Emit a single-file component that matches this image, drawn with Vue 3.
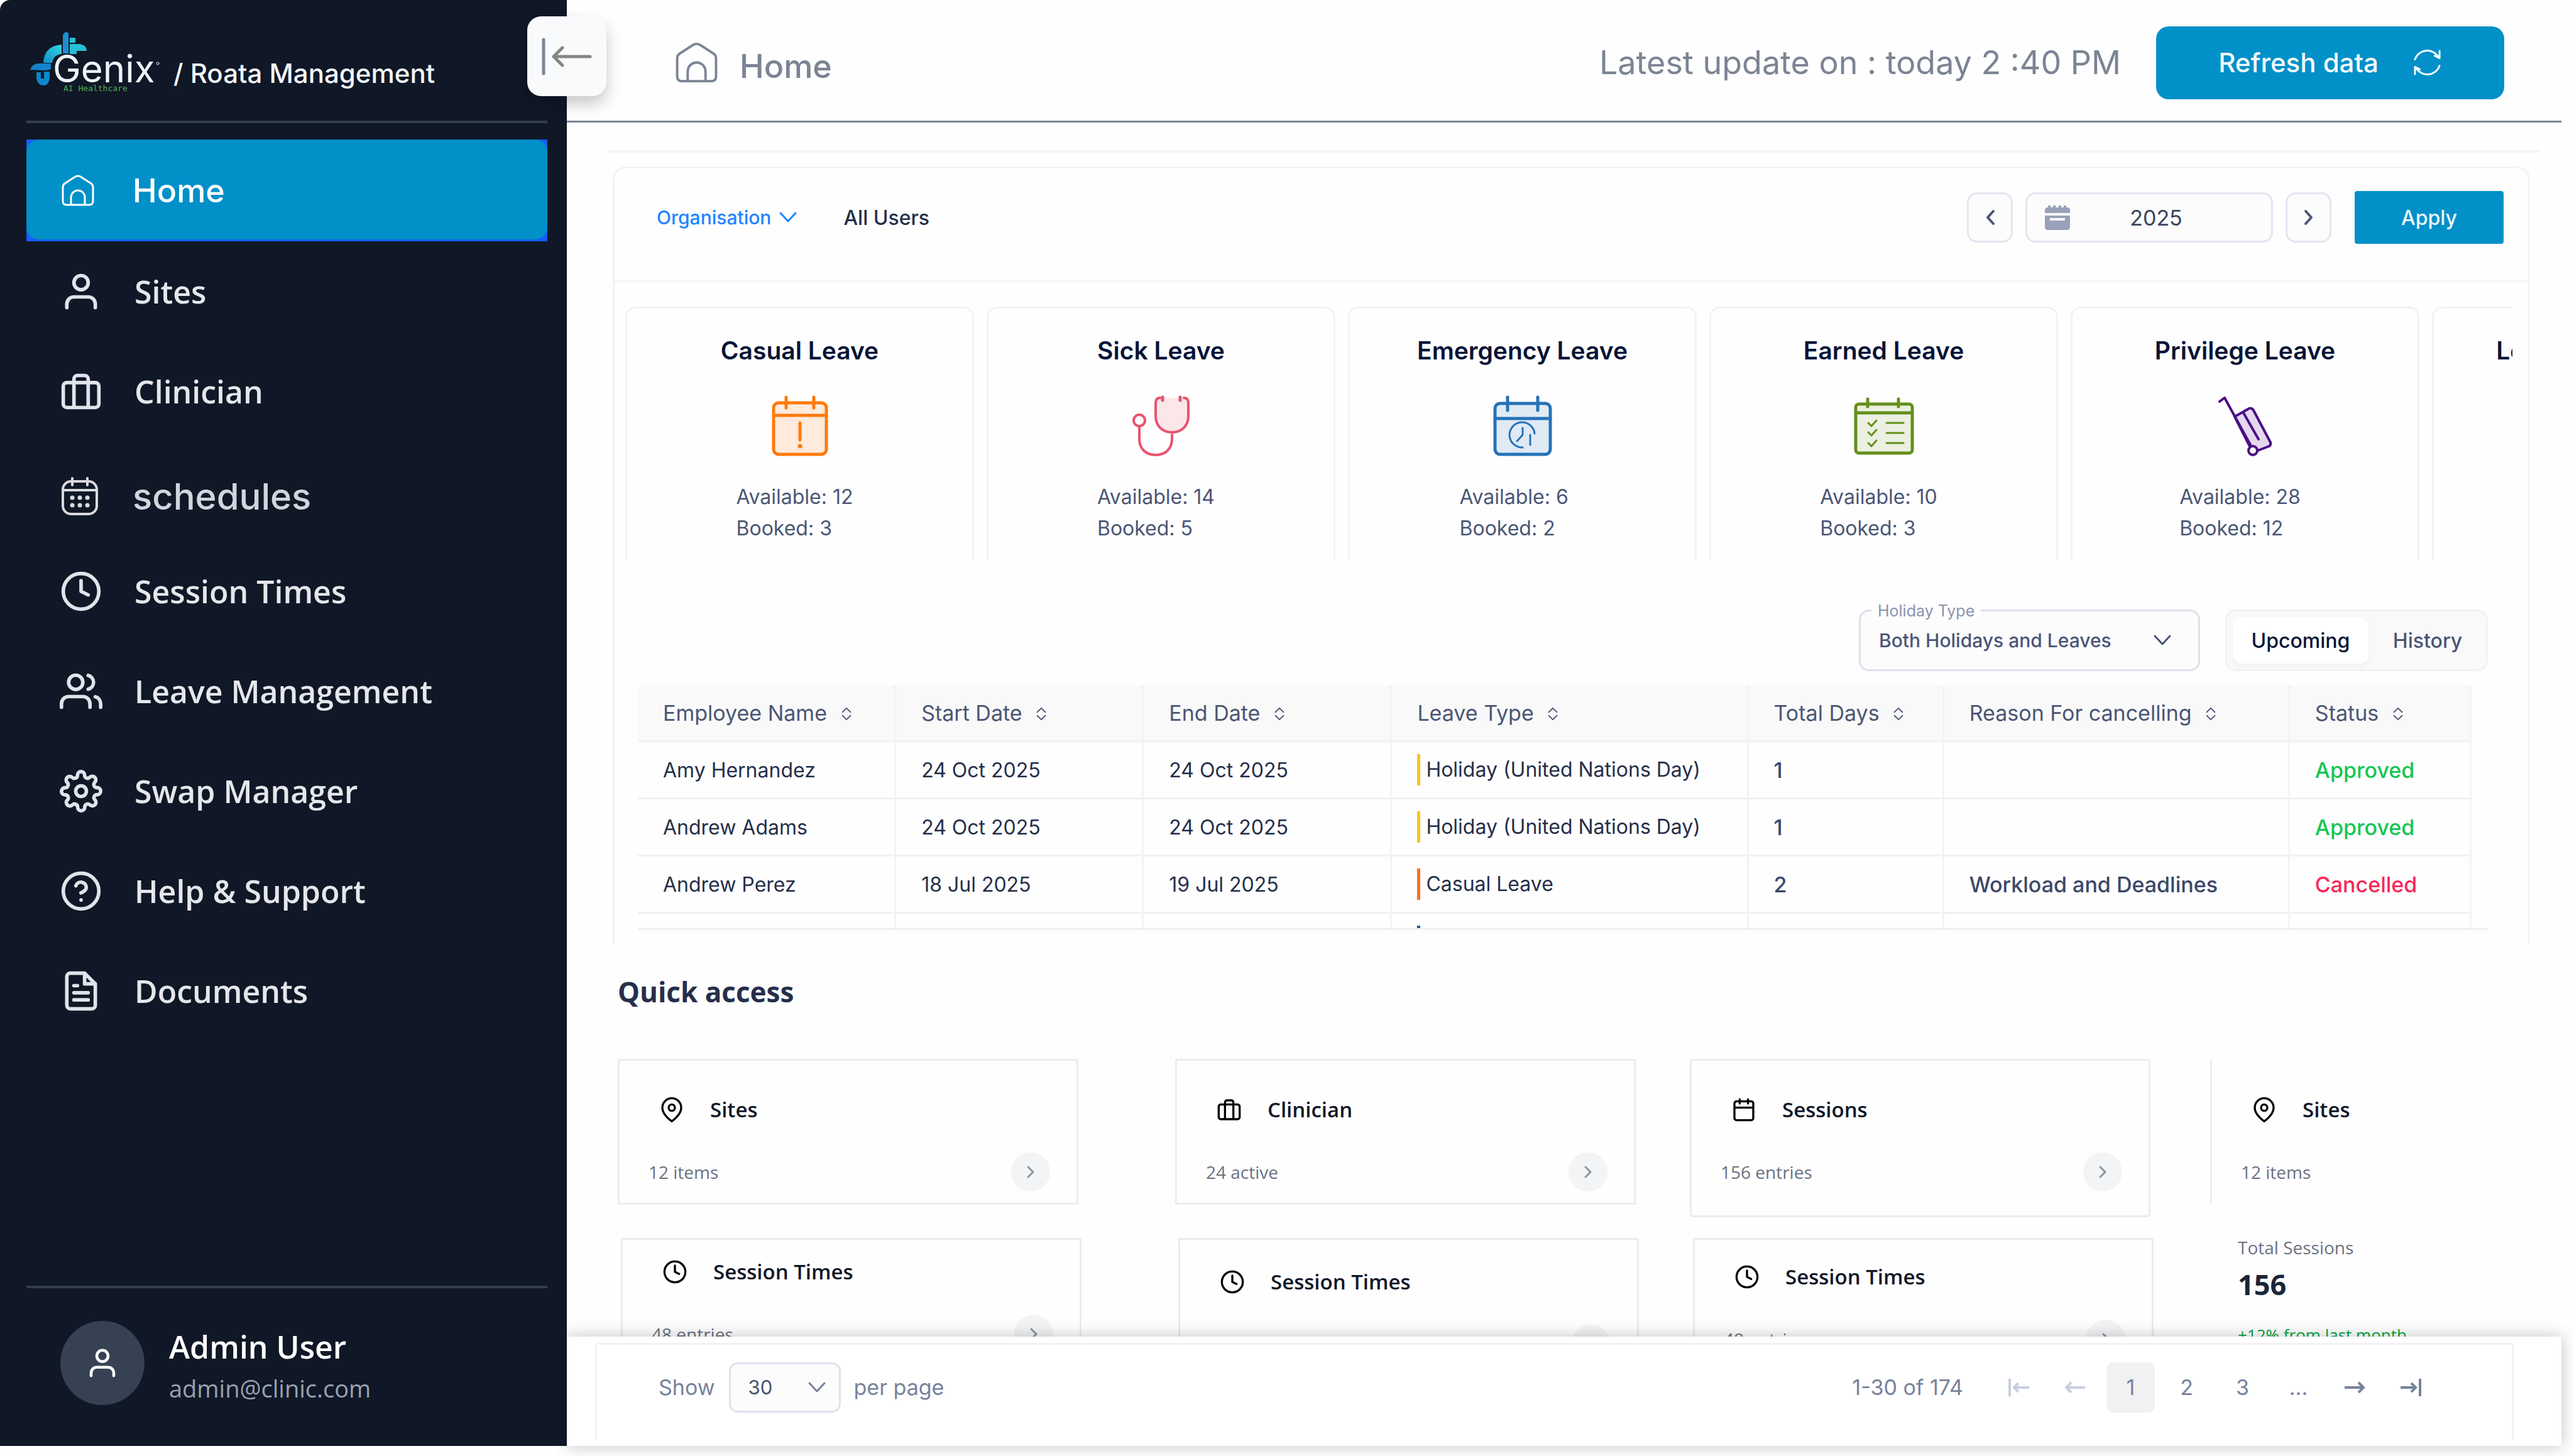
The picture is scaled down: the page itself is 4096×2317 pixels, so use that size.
<script setup>
import { ref } from 'vue'

const circle = (x, y, r) => `M${x - r} ${y}a${r} ${r} 0 1 0 ${2 * r} 0a${r} ${r} 0 1 0 ${-2 * r} 0`

const icons = {
  user: 'M20 21v-2a4 4 0 0 0-4-4H8a4 4 0 0 0-4 4v2' + circle(12, 7, 4),
  briefcase: 'M4 7h16a2 2 0 0 1 2 2v10a2 2 0 0 1-2 2H4a2 2 0 0 1-2-2V9a2 2 0 0 1 2-2zM16 21V5a2 2 0 0 0-2-2h-4a2 2 0 0 0-2 2v16',
  clock: circle(12, 12, 10) + 'M12 6v6l4 2',
  users: 'M17 21v-2a4 4 0 0 0-4-4H5a4 4 0 0 0-4 4v2M23 21v-2a4 4 0 0 0-3-3.87M16 3.13a4 4 0 0 1 0 7.75' + circle(9, 7, 4),
  gear: circle(12, 12, 3) + 'M19.4 15a1.65 1.65 0 0 0 .33 1.82l.06.06a2 2 0 0 1 0 2.83 2 2 0 0 1-2.83 0l-.06-.06a1.65 1.65 0 0 0-1.82-.33 1.65 1.65 0 0 0-1 1.51V21a2 2 0 0 1-2 2 2 2 0 0 1-2-2v-.09A1.65 1.65 0 0 0 9 19.4a1.65 1.65 0 0 0-1.82.33l-.06.06a2 2 0 0 1-2.83 0 2 2 0 0 1 0-2.83l.06-.06a1.65 1.65 0 0 0 .33-1.82 1.65 1.65 0 0 0-1.51-1H3a2 2 0 0 1-2-2 2 2 0 0 1 2-2h.09A1.65 1.65 0 0 0 4.6 9a1.65 1.65 0 0 0-.33-1.82l-.06-.06a2 2 0 0 1 0-2.83 2 2 0 0 1 2.83 0l.06.06a1.65 1.65 0 0 0 1.82.33H9a1.65 1.65 0 0 0 1-1.51V3a2 2 0 0 1 2-2 2 2 0 0 1 2 2v.09a1.65 1.65 0 0 0 1 1.51 1.65 1.65 0 0 0 1.82-.33l.06-.06a2 2 0 0 1 2.83 0 2 2 0 0 1 0 2.83l-.06.06a1.65 1.65 0 0 0-.33 1.82V9a1.65 1.65 0 0 0 1.51 1H21a2 2 0 0 1 2 2 2 2 0 0 1-2 2h-.09a1.65 1.65 0 0 0-1.51 1z',
  help: circle(12, 12, 10) + 'M9.09 9a3 3 0 0 1 5.83 1c0 2-3 3-3 3M12 17h.01',
  file: 'M14 2H6a2 2 0 0 0-2 2v16a2 2 0 0 0 2 2h12a2 2 0 0 0 2-2V8zM14 2v6h6M16 13H8M16 17H8M10 9H8',
  pin: 'M21 10c0 7-9 13-9 13s-9-6-9-13a9 9 0 0 1 18 0z' + circle(12, 10, 3),
  calendar: 'M5 4h14a2 2 0 0 1 2 2v14a2 2 0 0 1-2 2H5a2 2 0 0 1-2-2V6a2 2 0 0 1 2-2zM16 2v4M8 2v4M3 10h18',
  house: 'M2 20Q2 16 5 14L22 3Q26 1 30 3L47 14Q50 16 50 20V42Q50 48 44 48H8Q2 48 2 42ZM15 48V36a11 11 0 0 1 22 0V48'
}

const nav = [
  { label: 'Home', kind: 'house', active: true },
  { label: 'Sites', icon: icons.user },
  { label: 'Clinician', icon: icons.briefcase },
  { label: 'schedules', kind: 'schedule' },
  { label: 'Session Times', icon: icons.clock },
  { label: 'Leave Management', icon: icons.users },
  { label: 'Swap Manager', icon: icons.gear },
  { label: 'Help & Support', icon: icons.help },
  { label: 'Documents', icon: icons.file }
]

const leaves = [
  { kind: 'casual', name: 'Casual Leave', available: 12, booked: 3 },
  { kind: 'sick', name: 'Sick Leave', available: 14, booked: 5 },
  { kind: 'emergency', name: 'Emergency Leave', available: 6, booked: 2 },
  { kind: 'earned', name: 'Earned Leave', available: 10, booked: 3 },
  { kind: 'privilege', name: 'Privilege Leave', available: 28, booked: 12 },
  { kind: 'other', name: 'Leave Without Pay' }
]

const columns = [
  { title: 'Employee Name', share: 411 },
  { title: 'Start Date', share: 394 },
  { title: 'End Date', share: 395 },
  { title: 'Leave Type', share: 567 },
  { title: 'Total Days', share: 311 },
  { title: 'Reason For cancelling', share: 550 },
  { title: 'Status', share: 289 }
]
const total = columns.reduce((sum, c) => sum + c.share, 0)

const rows = [
  { name: 'Amy Hernandez', start: '24 Oct 2025', end: '24 Oct 2025', type: 'Holiday (United Nations Day)', tone: 'yellow', days: 1, reason: '', status: 'Approved' },
  { name: 'Andrew Adams', start: '24 Oct 2025', end: '24 Oct 2025', type: 'Holiday (United Nations Day)', tone: 'yellow', days: 1, reason: '', status: 'Approved' },
  { name: 'Andrew Perez', start: '18 Jul 2025', end: '19 Jul 2025', type: 'Casual Leave', tone: 'orange', days: 2, reason: 'Workload and Deadlines', status: 'Cancelled' },
  { name: '', start: '', end: '', type: '', tone: 'blue', days: '', reason: '', status: '' }
]

const quickTop = [
  { label: 'Sites', note: '12 items', icon: icons.pin, cls: '' },
  { label: 'Clinician', note: '24 active', icon: icons.briefcase, cls: '' },
  { label: 'Sessions', note: '156 entries', icon: icons.calendar, cls: 'tall' },
  { label: 'Sites', note: '12 items', icon: icons.pin, cls: 'open' }
]
const quickBottom = [
  { label: 'Session Times', note: '48 entries', icon: icons.clock, cls: 'compact' },
  { label: 'Session Times', note: '48 entries', icon: icons.clock, cls: 'roomy' },
  { label: 'Session Times', note: '48 entries', icon: icons.clock, cls: 'medium' }
]

const year = ref('2025')
const tab = ref('Upcoming')
const page = ref(1)
</script>

<template>
  <div class="app">
    <aside class="sidebar">
      <div class="brand">
        <svg class="logo" viewBox="0 0 206 94" role="img" aria-label="Genix AI Healthcare">
          <defs>
            <linearGradient id="aqua" x1="0" y1="1" x2="1" y2="0">
              <stop offset="0" stop-color="#0e8fcb" />
              <stop offset="1" stop-color="#35d3e2" />
            </linearGradient>
          </defs>
          <path d="M52 34V5q4-8 9-3v32z" fill="#1a8fd0" />
          <path d="M63 9h9v8h-9zM63 19h16q11 2 11 11H74v5H63z" fill="#25bfd6" />
          <path d="M50 20v15q-13 1-15 14H21Q22 22 50 20z" fill="url(#aqua)" />
          <path d="M0 60q4-10 13-10h20v9q-4 2-10 2z" fill="#1582c8" />
          <path d="M10 64h7v10h5V63h9v9q-1 13-10 13T10 74z" fill="#0d86cc" />
          <text class="logo-name" x="36" y="80">Genix</text>
          <circle cx="203" cy="50" r="2" fill="none" stroke="#e5e7eb" />
          <text class="logo-sub" x="53" y="94">AI Healthcare</text>
        </svg>
        <span class="brand-title">/ Roata Management</span>
      </div>

      <nav class="nav">
        <a v-for="item in nav" :key="item.label" href="#" class="nav-item" :class="[{ active: item.active }, item.kind]">
          <svg v-if="item.kind === 'house'" class="nav-house" viewBox="0 0 52 50"><path :d="icons.house" /></svg>
          <svg v-else-if="item.kind === 'schedule'" class="nav-schedule" viewBox="0 0 58 60">
            <rect x="2" y="6" width="54" height="52" rx="13" />
            <path d="M17 1v11M41 1v11M3 20h52" />
            <path class="dots" d="M17 32h.1M29 32h.1M41 32h.1M17 44h.1M29 44h.1M41 44h.1" />
          </svg>
          <svg v-else class="nav-icon" viewBox="0 0 24 24"><path :d="item.icon" /></svg>
          <span>{{ item.label }}</span>
        </a>
      </nav>

      <div class="account">
        <div class="avatar">
          <svg viewBox="0 0 24 24"><path :d="icons.user" /></svg>
        </div>
        <div class="account-text">
          <strong>Admin User</strong>
          <span>admin@clinic.com</span>
        </div>
      </div>

      <button class="collapse" type="button" aria-label="Collapse menu">
        <svg viewBox="0 0 80 60">
          <path d="M3 3v54" stroke="#7b8494" />
          <path d="M77 30H19M33 16L19 30l14 14" stroke="#858585" />
        </svg>
      </button>
    </aside>

    <main class="main">
      <header class="topbar">
        <h1 class="page-title">
          <svg viewBox="0 0 52 50"><path :d="icons.house" /></svg>
          Home
        </h1>
        <span class="updated">Latest update on : today 2 :40 PM</span>
        <button class="refresh" type="button">
          Refresh data
          <svg viewBox="0 0 48 48">
            <path d="M4 19A21 21 0 0 1 42 15M44 5v12l-8-4M44 29A21 21 0 0 1 6 33M4 43V31l8 4" />
          </svg>
        </button>
      </header>

      <div class="content">
        <div class="rule"></div>

        <section class="panel">
          <div class="filters">
            <button class="org" type="button">
              Organisation
              <svg class="chevron" viewBox="0 0 28 18"><path d="M2 2l12 13L26 2" /></svg>
            </button>
            <span class="all-users">All Users</span>
            <button class="step" type="button" aria-label="Previous year">
              <svg viewBox="0 0 16 26"><path d="M13 3L4 13l9 10" /></svg>
            </button>
            <div class="year">
              <svg viewBox="0 0 42 40">
                <path d="M8 1v5M16 1v5M25 1v5M33 1v5" stroke="#98a1b8" stroke-width="4" />
                <path d="M1 13V9q0-5 5-5h30q5 0 5 5v4z" fill="#98a1b8" />
                <path fill-rule="evenodd" d="M1 17h40v18q0 5-5 5H6q-5 0-5-5zM9 21v4h24v-4z" fill="#98a1b8" />
              </svg>
              <input v-model="year" type="text" aria-label="Year" />
            </div>
            <button class="step" type="button" aria-label="Next year">
              <svg viewBox="0 0 16 26"><path d="M3 3l9 10-9 10" /></svg>
            </button>
            <button class="apply" type="button">Apply</button>
          </div>

          <div class="strip">
            <article v-for="leave in leaves" :key="leave.name" class="leave">
              <h2>{{ leave.name }}</h2>
              <svg v-if="leave.kind === 'casual'" class="leave-icon" viewBox="0 0 96 96" stroke="#ff7a0a" stroke-width="5">
                <rect x="6" y="11" width="84" height="82" rx="8" fill="#ffeadc" />
                <path d="M26 2v17M70 2v17M6 31h84M48 43v27" />
                <path d="M48 80h.1" stroke-width="7" />
              </svg>
              <svg v-else-if="leave.kind === 'sick'" class="leave-icon" viewBox="0 0 96 96" stroke="#ea5370" stroke-width="4">
                <path d="M46 3q-7 0-7 9v20c0 15 10 26 26 26s26-11 26-26V12q0-9-7-9" fill="#fbe6ea" />
                <path d="M50 2v5M78 2v5" stroke-width="5" />
                <circle cx="13" cy="39" r="9" />
                <path d="M13 49v19c0 16 10 26 26 26s26-10 26-26v-6" />
              </svg>
              <svg v-else-if="leave.kind === 'emergency'" class="leave-icon" viewBox="0 0 96 96" stroke="#2572b8" stroke-width="5">
                <rect x="4" y="12" width="88" height="81" rx="8" fill="#e0eaf5" />
                <path d="M24 2v21M72 2v21M4 36h88" />
                <g stroke-width="3">
                  <path d="M48 82a20 20 0 1 1 19-22" />
                  <path d="M48 51v11l-9 10M60 62v16" />
                </g>
              </svg>
              <svg v-else-if="leave.kind === 'earned'" class="leave-icon" viewBox="0 0 96 96" stroke="#648f1c" stroke-width="5">
                <rect x="3" y="13" width="90" height="78" rx="5" fill="#ebf0e1" />
                <path d="M22 5v12M71 5v12M3 27h90" />
                <g stroke-width="3">
                  <path d="M23 43l5 5 8-9M23 58l5 5 8-9M23 75l5 5 8-9M52 43h27M52 59h27M52 75h27" />
                </g>
              </svg>
              <svg v-else-if="leave.kind === 'privilege'" class="leave-icon" viewBox="0 0 96 96" stroke="#4b0f84" stroke-width="4">
                <path d="M31 33L54 20q5-1 7 3l27 51q1 4-2 6L60 90z" fill="#e4d8ee" />
                <path d="M7 9l8-6L60 85M45 27l24 42" />
                <circle cx="60" cy="87" r="7" fill="#fff" />
              </svg>
              <p v-if="leave.available" class="leave-stats">
                Available: {{ leave.available }}<br />Booked: {{ leave.booked }}
              </p>
            </article>
          </div>

          <div class="toolbar">
            <div class="field">
              <label for="holiday-type">Holiday Type</label>
              <select id="holiday-type">
                <option>Both Holidays and Leaves</option>
              </select>
              <svg class="chevron" viewBox="0 0 28 18"><path d="M2 2l12 13L26 2" /></svg>
            </div>
            <div class="tabs">
              <button v-for="name in ['Upcoming', 'History']" :key="name" type="button" :class="{ on: tab === name }" @click="tab = name">{{ name }}</button>
            </div>
          </div>

          <div class="table-clip">
            <table>
              <colgroup>
                <col v-for="c in columns" :key="c.title" :style="{ width: (c.share / total) * 100 + '%' }" />
              </colgroup>
              <thead>
                <tr>
                  <th v-for="c in columns" :key="c.title" scope="col">
                    {{ c.title }}
                    <svg class="sort" viewBox="0 0 18 24"><path d="M2 9l7-7 7 7M2 15l7 7 7-7" /></svg>
                  </th>
                </tr>
              </thead>
              <tbody>
                <tr v-for="(r, i) in rows" :key="i">
                  <td>{{ r.name }}</td>
                  <td>{{ r.start }}</td>
                  <td>{{ r.end }}</td>
                  <td><span class="type" :class="r.tone">{{ r.type }}</span></td>
                  <td class="big">{{ r.days }}</td>
                  <td class="big">{{ r.reason }}</td>
                  <td class="big" :class="r.status.toLowerCase()">{{ r.status }}</td>
                </tr>
              </tbody>
            </table>
          </div>
        </section>

        <section class="quick">
          <h2>Quick access</h2>
          <div class="quick-row">
            <article v-for="(q, i) in quickTop" :key="i" class="card" :class="q.cls">
              <h3><svg viewBox="0 0 24 24"><path :d="q.icon" /></svg>{{ q.label }}</h3>
              <div class="card-foot">
                <span>{{ q.note }}</span>
                <button v-if="q.cls !== 'open'" type="button" aria-label="Open">
                  <svg viewBox="0 0 14 20"><path d="M3 2l8 8-8 8" /></svg>
                </button>
              </div>
            </article>
          </div>
          <div class="quick-row second">
            <article v-for="(q, i) in quickBottom" :key="i" class="card" :class="q.cls">
              <h3><svg viewBox="0 0 24 24"><path :d="q.icon" /></svg>{{ q.label }}</h3>
              <div class="card-foot">
                <span>{{ q.note }}</span>
                <button type="button" aria-label="Open">
                  <svg viewBox="0 0 14 20"><path d="M3 2l8 8-8 8" /></svg>
                </button>
              </div>
            </article>
            <div class="stat">
              <span>Total Sessions</span>
              <strong>156</strong>
              <em>+12% from last month</em>
            </div>
          </div>
        </section>
      </div>

      <footer class="pager">
        <div class="pager-inner">
          <label for="page-size">Show</label>
          <div class="size">
            <select id="page-size">
              <option>30</option>
            </select>
            <svg class="chevron" viewBox="0 0 28 18"><path d="M2 2l12 13L26 2" /></svg>
          </div>
          <span>per page</span>
          <span class="range">1-30 of 174</span>
          <div class="pages">
            <button type="button" class="muted" aria-label="First page">
              <svg viewBox="0 0 34 30"><path d="M2 1v28M33 15H9M16 8l-7 7 7 7" /></svg>
            </button>
            <button type="button" class="muted" aria-label="Previous page">
              <svg viewBox="0 0 34 30"><path d="M33 15H3M11 7l-8 8 8 8" /></svg>
            </button>
            <button v-for="n in 3" :key="n" type="button" :class="{ on: page === n }" @click="page = n">{{ n }}</button>
            <span>...</span>
            <button type="button" aria-label="Next page">
              <svg viewBox="0 0 34 30"><path d="M1 15h30M23 7l8 8-8 8" /></svg>
            </button>
            <button type="button" aria-label="Last page">
              <svg viewBox="0 0 34 30"><path d="M32 1v28M1 15h24M18 8l7 7-7 7" /></svg>
            </button>
          </div>
        </div>
      </footer>
    </main>
  </div>
</template>

<style>
body {
  margin: 0;
  background: #fefefe;
}
</style>

<style scoped>
* {
  box-sizing: border-box;
}
.app {
  display: flex;
  height: 100vh;
  padding: 0 20px 16px 0;
  overflow: hidden;
  background: #fefefe;
  font-family: Inter, "Liberation Sans", sans-serif;
  color: #4b5675;
}
button,
input,
select {
  margin: 0;
  padding: 0;
  border: 0;
  background: none;
  font: inherit;
  color: inherit;
  appearance: none;
  outline: none;
}
h1,
h2,
h3,
p {
  margin: 0;
}
svg {
  flex: none;
  display: block;
  fill: none;
  stroke-linecap: round;
  stroke-linejoin: round;
  overflow: visible;
}

/* Sidebar */
.sidebar {
  position: relative;
  z-index: 3;
  flex: none;
  display: flex;
  flex-direction: column;
  width: 902px;
  padding: 0 31px 0 42px;
  border-top-left-radius: 16px;
  background: #101726;
}
.brand {
  display: flex;
  align-items: flex-end;
  gap: 22px;
  height: 196px;
  padding: 0 0 47px 6px;
  border-bottom: 4px solid #333e4e;
}
.logo {
  width: 206px;
  height: 94px;
}
.logo-name {
  font-family: Inter, sans-serif;
  font-size: 60px;
  fill: #eef1f6;
}
.logo-sub {
  font-family: "DejaVu Sans Mono", monospace;
  font-size: 13px;
  fill: #4fae57;
}
.brand-title {
  font-size: 42px;
  font-weight: 500;
  line-height: 56px;
  color: #f1f4f8;
  white-space: nowrap;
}
.nav {
  display: flex;
  flex-direction: column;
  padding-top: 26px;
}
.nav-item {
  display: flex;
  align-items: center;
  gap: 51px;
  height: 159px;
  padding-left: 53px;
  font-family: "Open Sans", "Noto Sans", sans-serif;
  font-size: 50px;
  font-weight: 600;
  color: #e5e7eb;
  text-decoration: none;
  white-space: nowrap;
}
.nav-item svg {
  stroke: #e0e3e9;
  stroke-width: 2;
}
.nav-icon {
  width: 68px;
  height: 68px;
}
.nav-item.active {
  position: relative;
  z-index: 0;
  gap: 61px;
  height: 162px;
  padding-left: 56px;
  background: #155dfc;
  font-family: Inter, sans-serif;
  font-size: 52px;
  font-weight: 500;
  color: #fff;
}
.nav-item.active::before {
  content: "";
  position: absolute;
  inset: 0 0 3px;
  z-index: -1;
  border-radius: 20px;
  background: #0190c8;
}
.nav-item.active .nav-house {
  width: 52px;
  height: 50px;
  stroke: #fff;
  stroke-width: 3;
}
.nav-item.schedule {
  gap: 55px;
  padding: 16px 0 0 56px;
  font-family: Inter, sans-serif;
  font-size: 58px;
  font-weight: 500;
  color: #d1d5dc;
}
.nav-item .nav-schedule {
  width: 58px;
  height: 60px;
  stroke: #d9dadd;
  stroke-width: 4;
}
.nav-schedule .dots {
  stroke-width: 7;
}
.account {
  display: flex;
  gap: 39px;
  margin-top: auto;
  padding: 52px 0 59px 54px;
  border-top: 4px solid #333e4e;
  font-family: "Open Sans", "Noto Sans", sans-serif;
}
.avatar {
  display: flex;
  align-items: center;
  justify-content: center;
  width: 134px;
  height: 134px;
  border-radius: 50%;
  background: #364153;
}
.avatar svg {
  width: 54px;
  height: 54px;
  stroke: #fff;
  stroke-width: 2;
}
.account-text {
  display: flex;
  flex-direction: column;
  padding-top: 8px;
  line-height: 66px;
}
.account-text strong {
  font-size: 50px;
  font-weight: 600;
  color: #fff;
}
.account-text span {
  font-size: 38px;
  color: #99a1af;
}
.collapse {
  position: absolute;
  top: 26px;
  right: -63px;
  display: flex;
  align-items: center;
  justify-content: center;
  width: 126px;
  height: 127px;
  border-radius: 22px;
  background: #f9fafc;
  box-shadow: 0 12px 24px rgba(0, 0, 0, 0.22);
}
.collapse svg {
  width: 80px;
  height: 60px;
  stroke-width: 5;
}

/* Top bar */
.main {
  flex: 1;
  min-width: 0;
  display: flex;
  flex-direction: column;
}
.topbar {
  flex: none;
  display: flex;
  align-items: center;
  height: 195px;
  padding: 7px 91px 0 173px;
  border-bottom: 3px solid #7b8494;
  font-size: 52px;
  color: #7b8494;
  white-space: nowrap;
}
.page-title {
  display: flex;
  align-items: flex-end;
  gap: 35px;
  margin-right: auto;
  font-size: 52px;
  font-weight: 500;
  line-height: 52px;
}
.page-title svg {
  width: 67px;
  height: 65px;
  stroke: #7b8494;
  stroke-width: 3;
}
.updated {
  margin-right: 56px;
}
.refresh {
  display: flex;
  align-items: center;
  justify-content: center;
  gap: 54px;
  width: 554px;
  height: 116px;
  border-radius: 20px;
  background: #0190c8;
  font-size: 42px;
  font-weight: 500;
  color: #f4fafd;
}
.refresh svg {
  width: 47px;
  height: 47px;
  stroke: #f4fafd;
  stroke-width: 3;
}

/* Leave panel */
.content {
  flex: 1;
  min-height: 0;
  overflow: hidden;
}
.rule {
  height: 4px;
  margin: 44px 34px 22px 65px;
  background: #f6f6f6;
}
.panel {
  margin: 0 50px 0 73px;
  padding-bottom: 24px;
  border: 3px solid #f3f3f5;
  border-bottom: 0;
  border-radius: 20px 20px 0 0;
}
.filters {
  display: flex;
  align-items: center;
  padding: 36px 39px 58px 67px;
  border-bottom: 3px solid #f2f2f4;
}
.org {
  display: flex;
  align-items: center;
  gap: 13px;
  font-size: 30px;
  font-weight: 500;
  color: #1f84ff;
}
.chevron {
  width: 28px;
  height: 18px;
  stroke: currentColor;
  stroke-width: 3;
}
.all-users {
  margin: 0 auto 0 74px;
  font-size: 32px;
  font-weight: 500;
  color: #252f4a;
}
.step,
.year {
  display: flex;
  align-items: center;
  justify-content: center;
  height: 80px;
  border: 3px solid #e3e6f0;
  border-radius: 16px;
  background: #fcfcfc;
}
.step {
  width: 73px;
}
.step svg {
  width: 16px;
  height: 26px;
  stroke: #4b5675;
  stroke-width: 4;
}
.year {
  width: 394px;
  margin: 0 20px;
  padding: 0 27px;
}
.year svg {
  width: 42px;
  height: 40px;
  stroke-linecap: butt;
}
.year input {
  flex: 1;
  min-width: 0;
  padding-right: 20px;
  font-size: 34px;
  text-align: center;
  color: #3b455f;
}
.apply {
  width: 237px;
  height: 84px;
  margin-left: 37px;
  border-radius: 4px;
  background: #0190c8;
  font-size: 32px;
  font-weight: 500;
  color: #eaf6fb;
}
.strip {
  display: flex;
  gap: 20px;
  height: 404px;
  margin: 39px 25px 0 17px;
  overflow: hidden;
}
.leave {
  flex: none;
  display: flex;
  flex-direction: column;
  align-items: center;
  width: 555px;
  height: 440px;
  padding-top: 43px;
  border: 3px solid #f2f2f4;
  border-radius: 16px;
}
.leave h2 {
  font-size: 39px;
  font-weight: 600;
  line-height: 48px;
  color: #071437;
  white-space: nowrap;
}
.leave-icon {
  width: 96px;
  height: 96px;
  margin: 48px 0 40px;
}
.leave-stats {
  min-width: 200px;
  padding-right: 16px;
  font-size: 32px;
  line-height: 50px;
  white-space: nowrap;
}
.toolbar {
  display: flex;
  justify-content: flex-end;
  gap: 40px;
  margin: 78px 64px 22px 0;
}
.field {
  position: relative;
  width: 543px;
  height: 98px;
}
.field select {
  width: 100%;
  height: 100%;
  padding-left: 29px;
  border: 3px solid #dde1ec;
  border-radius: 16px;
  background: #fcfcfd;
  font-size: 30px;
  font-weight: 500;
  color: #4b5675;
}
.field label {
  position: absolute;
  top: -14px;
  left: 20px;
  padding: 0 10px;
  background: #fefefe;
  font-size: 25px;
  line-height: 32px;
  color: #8a93ae;
}
.field .chevron,
.size .chevron {
  position: absolute;
  top: calc(50% - 9px);
  right: 46px;
  pointer-events: none;
}
.tabs {
  display: flex;
  gap: 10px;
  width: 418px;
  height: 98px;
  padding: 9px;
  border: 3px solid #f2f2f4;
  border-radius: 16px;
  background: #f9f9fa;
  font-size: 32px;
  font-weight: 500;
}
.tabs button {
  flex: 1;
  border-radius: 14px;
}
.tabs button.on {
  flex: none;
  width: 216px;
  background: #fff;
  box-shadow: 0 4px 8px rgba(0, 0, 0, 0.04);
  color: #071437;
}
.table-clip {
  height: 390px;
  margin: 0 64px 0 37px;
  overflow: hidden;
  border-bottom: 3px solid #f1f1f4;
}
table {
  width: calc(100% - 26px);
  table-layout: fixed;
  border-collapse: separate;
  border-spacing: 0;
}
th,
td {
  height: 91px;
  padding: 0 0 0 40px;
  border-right: 3px solid #f3f3f5;
  border-bottom: 3px solid #f1f1f4;
  text-align: left;
  white-space: nowrap;
  font-size: 32px;
  font-weight: 400;
  color: #252f4a;
}
th {
  background: #f9f9f9;
  font-size: 34px;
  color: #4b5675;
}
.sort {
  display: inline-block;
  width: 18px;
  height: 22px;
  margin-left: 12px;
  stroke: #4b5675;
  stroke-width: 2;
}
td.big {
  font-size: 34px;
  font-weight: 500;
  color: #3b4868;
}
td.approved {
  color: #17c653;
}
td.cancelled {
  color: #f8285a;
}
.type {
  display: block;
  height: 50px;
  padding-left: 9px;
  border-left: 5px solid;
  line-height: 50px;
}
.type.yellow {
  border-color: #fcc419;
}
.type.orange {
  border-color: #ff6f1e;
}
.type.blue {
  border-color: #1b5fb0;
}

/* Quick access */
.quick {
  padding: 44px 0 0 81px;
  font-family: "Open Sans", "Noto Sans", sans-serif;
}
.quick > h2 {
  font-size: 44px;
  font-weight: 700;
  line-height: 60px;
  color: #252f4a;
}
.quick-row {
  display: grid;
  grid-template-columns: 733fr 154fr 733fr 86fr 733fr 95fr 559fr;
  align-items: start;
  margin-top: 77px;
}
.quick-row > :nth-child(2) {
  grid-column: 3;
}
.quick-row > :nth-child(3) {
  grid-column: 5;
}
.quick-row > :nth-child(4) {
  grid-column: 7;
}
.quick-row.second {
  margin: 33px -5px 0 5px;
}
.card {
  height: 232px;
  padding: 56px 42px 0 46px;
  border: 3px solid #ececee;
}
.card.tall {
  height: 252px;
  border-radius: 4px;
}
.card.open {
  border-color: transparent transparent transparent #ececee;
}
.card.compact {
  padding-top: 29px;
}
.card.medium {
  padding-top: 37px;
}
.card.roomy {
  padding-top: 45px;
}
.card h3 {
  display: flex;
  align-items: center;
  gap: 41px;
  padding-left: 17px;
  font-size: 33px;
  font-weight: 600;
  line-height: 44px;
  color: #101828;
}
.card h3 svg {
  width: 40px;
  height: 40px;
  stroke: #000;
  stroke-width: 2;
}
.card-foot {
  display: flex;
  align-items: center;
  justify-content: space-between;
  height: 62px;
  margin-top: 46px;
  font-size: 28px;
  color: #6a7282;
}
.card-foot button {
  display: flex;
  align-items: center;
  justify-content: center;
  width: 62px;
  height: 62px;
  border-radius: 50%;
  background: #f3f4f6;
}
.card-foot svg {
  width: 14px;
  height: 20px;
  stroke: #8b93a1;
  stroke-width: 3;
}
.stat {
  display: flex;
  flex-direction: column;
  padding-left: 39px;
  color: #6a7282;
}
.stat span {
  font-size: 28px;
  line-height: 30px;
}
.stat strong {
  margin-top: 14px;
  font-size: 45px;
  line-height: 60px;
  color: #1a2538;
}
.stat em {
  margin-top: 34px;
  font-size: 26px;
  font-style: normal;
  line-height: 32px;
  color: #00a63e;
}

/* Pagination */
.pager {
  position: relative;
  z-index: 2;
  flex: none;
  height: 174px;
  padding: 10px 76px 10px 45px;
  background: #fff;
  box-shadow: 0 0 24px rgba(0, 0, 0, 0.24);
}
.pager-inner {
  display: flex;
  align-items: center;
  height: 154px;
  padding: 0 123px 16px 98px;
  border: solid #f2f2f3;
  border-width: 3px 3px 0;
  font-size: 34px;
  color: #78829d;
}
.size {
  position: relative;
  width: 178px;
  height: 80px;
  margin: 0 21px 0 22px;
}
.size select {
  width: 100%;
  height: 100%;
  padding-left: 28px;
  border: 3px solid #dfe2ee;
  border-radius: 14px;
  background: #fcfcfc;
  font-size: 31px;
  color: #4b5675;
}
.size .chevron {
  right: 24px;
}
.range {
  margin: 0 50px 0 auto;
}
.pages {
  display: flex;
  gap: 12px;
}
.pages > * {
  display: flex;
  align-items: center;
  justify-content: center;
  width: 77px;
  height: 80px;
  border-radius: 10px;
}
.pages .on {
  background: #f1f1f4;
}
.pages svg {
  width: 34px;
  height: 30px;
  stroke: #78829d;
  stroke-width: 4;
  stroke-linecap: butt;
  stroke-linejoin: miter;
}
.pages .muted svg {
  stroke: #c9cfe0;
}
</style>
